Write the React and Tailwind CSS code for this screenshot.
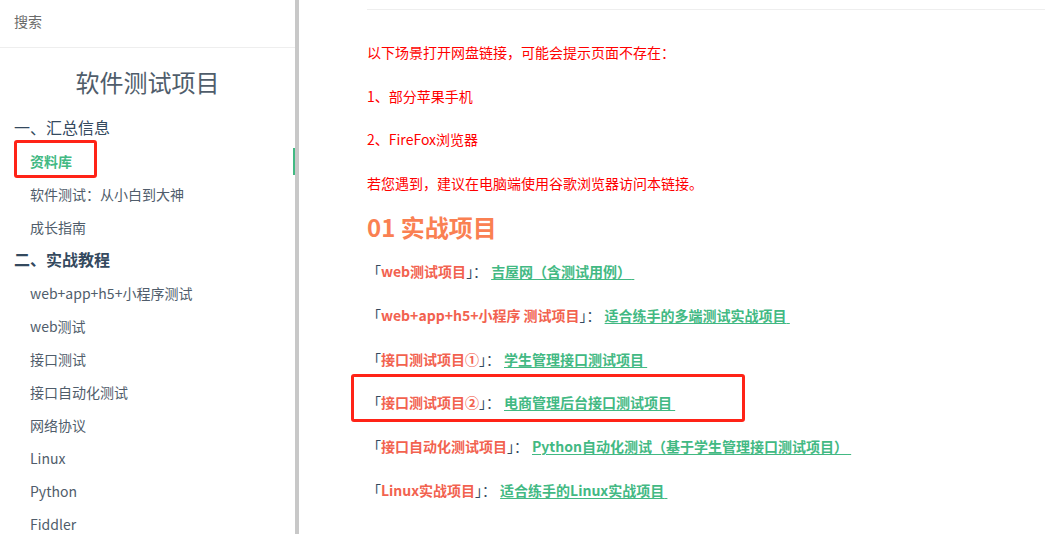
import React from 'react';

const font = { fontFamily: '"Noto Sans CJK SC", "Noto Sans", sans-serif' };

const navItems = [
  { type: 'group', label: '一、汇总信息' },
  { type: 'item', label: '资料库', active: true },
  { type: 'item', label: '软件测试：从小白到大神' },
  { type: 'item', label: '成长指南' },
  { type: 'group', label: '二、实战教程', bold: true },
  { type: 'item', label: 'web+app+h5+小程序测试' },
  { type: 'item', label: 'web测试' },
  { type: 'item', label: '接口测试' },
  { type: 'item', label: '接口自动化测试' },
  { type: 'item', label: '网络协议' },
  { type: 'item', label: 'Linux' },
  { type: 'item', label: 'Python' },
  { type: 'item', label: 'Fiddler' },
];

const projects = [
  { name: 'web测试项目', link: '吉屋网（含测试用例）' },
  { name: 'web+app+h5+小程序 测试项目', link: '适合练手的多端测试实战项目' },
  { name: '接口测试项目①', link: '学生管理接口测试项目' },
  { name: '接口测试项目②', link: '电商管理后台接口测试项目', marked: true },
  { name: '接口自动化测试项目', link: 'Python自动化测试（基于学生管理接口测试项目）' },
  { name: 'Linux实战项目', link: '适合练手的Linux实战项目' },
];

const Sidebar = () => (
  <aside className="w-[295px] shrink-0 bg-white">
    <div className="flex h-[48px] items-center border-b border-[#eeeeee] px-[14px] pb-[4px] text-[14px] text-[#6b6b6b]">
      搜索
    </div>
    <h1 className="mt-[16px] mb-[12px] text-center text-[24px] leading-[36px] font-normal text-[#505d6b]">
      软件测试项目
    </h1>
    <ul>
      {navItems.map((n) =>
        n.type === 'group' ? (
          <li
            key={n.label}
            className={`flex h-[33px] items-center pb-[3px] pl-[14px] text-[16px] text-[#34495e] ${
              n.bold ? 'font-bold' : ''
            }`}
          >
            {n.label}
          </li>
        ) : (
          <li key={n.label} className="relative flex h-[33px] items-center pb-[1px]">
            <div
              className={`flex h-[27px] w-full items-center pl-[30px] text-[14px] ${
                n.active
                  ? 'border-r-2 border-[#42b983] font-bold text-[#42b983]'
                  : 'text-[#505d6b]'
              }`}
            >
              {n.label}
            </div>
            {n.active ? (
              <div className="absolute top-[-5px] left-[14px] h-[38px] w-[83px] rounded-[3px] border-[3px] border-[#ff2317]" />
            ) : null}
          </li>
        )
      )}
    </ul>
  </aside>
);

const Content = () => (
  <main className="flex-1 pl-[68px]">
    <div className="mt-[9px] border-t border-[#eeeeee]" />
    <div className="mt-[31px] text-[14px] leading-[22px] text-[#ff0000]">
      <p className="mb-[21.7px]">以下场景打开网盘链接，可能会提示页面不存在：</p>
      <p className="mb-[21.7px]">1、部分苹果手机</p>
      <p className="mb-[21.7px]">2、FireFox浏览器</p>
      <p>若您遇到，建议在电脑端使用谷歌浏览器访问本链接。</p>
    </div>
    <h2 className="mt-[15px] text-[24px] leading-[36px] font-bold text-[#fa8052]">01 实战项目</h2>
    <ul className="mt-[15px] text-[14px] leading-[22px]">
      {projects.map((p) => (
        <li key={p.name} className="relative mb-[21.8px] flex items-center whitespace-nowrap">
          <span className="text-[#34495e]">「</span>
          <span className="font-bold text-[#f2624f]">{p.name}</span>
          <span className="text-[#34495e]">」：</span>
          <a className="ml-[4px] font-bold text-[#42b983] underline underline-offset-2">{p.link}&nbsp;</a>
          {p.marked ? (
            <div className="absolute top-[-17px] left-[-16px] h-[48px] w-[394px] rounded-[3px] border-[3px] border-[#ff2317]" />
          ) : null}
        </li>
      ))}
    </ul>
  </main>
);

export default function App() {
  return (
    <div className="flex h-[534px] w-[1045px] overflow-hidden bg-white" style={font}>
      <Sidebar />
      <div className="w-[4px] shrink-0 bg-[#c8c8c8]" />
      <Content />
    </div>
  );
}
